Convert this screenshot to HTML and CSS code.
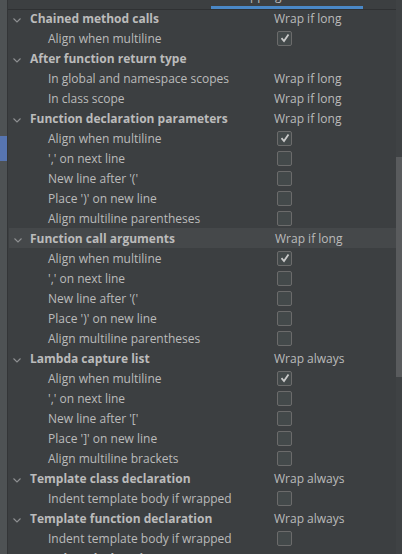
FILE: index.html
```html
<!DOCTYPE html>
<html>
<head>
<meta charset="utf-8">
<link rel="stylesheet" href="styles.css">
</head>
<body>
<div class="app">
  <div class="side"><div class="side-mark"></div></div>
  <div class="main">
    <div class="tabs"><div class="tab active"><span class="tab-label">Wrapping and Braces</span></div></div>
    <div class="list">
      <div class="inner">
        <div class="row group"><div class="lab"><svg class="chev" viewBox="0 0 8 5"><path d="M0.5 0.5 L4 4 L7.5 0.5"/></svg>Chained method calls</div><div class="val">Wrap if long</div></div>
        <div class="row child"><div class="lab">Align when multiline</div><div class="val"><span class="cb on"><svg viewBox="0 0 12 12"><path d="M2.5 6.2 L5 9 L9.5 2.5"/></svg></span></div></div>
        <div class="row group"><div class="lab"><svg class="chev" viewBox="0 0 8 5"><path d="M0.5 0.5 L4 4 L7.5 0.5"/></svg>After function return type</div><div class="val"></div></div>
        <div class="row child"><div class="lab">In global and namespace scopes</div><div class="val">Wrap if long</div></div>
        <div class="row child"><div class="lab">In class scope</div><div class="val">Wrap if long</div></div>
        <div class="row group"><div class="lab"><svg class="chev" viewBox="0 0 8 5"><path d="M0.5 0.5 L4 4 L7.5 0.5"/></svg>Function declaration parameters</div><div class="val">Wrap if long</div></div>
        <div class="row child"><div class="lab">Align when multiline</div><div class="val"><span class="cb on"><svg viewBox="0 0 12 12"><path d="M2.5 6.2 L5 9 L9.5 2.5"/></svg></span></div></div>
        <div class="row child"><div class="lab">',' on next line</div><div class="val"><span class="cb"></span></div></div>
        <div class="row child"><div class="lab">New line after '('</div><div class="val"><span class="cb"></span></div></div>
        <div class="row child"><div class="lab">Place ')' on new line</div><div class="val"><span class="cb"></span></div></div>
        <div class="row child"><div class="lab">Align multiline parentheses</div><div class="val"><span class="cb"></span></div></div>
        <div class="row group sel"><div class="lab"><svg class="chev" viewBox="0 0 8 5"><path d="M0.5 0.5 L4 4 L7.5 0.5"/></svg>Function call arguments</div><div class="val">Wrap if long</div></div>
        <div class="row child"><div class="lab">Align when multiline</div><div class="val"><span class="cb on"><svg viewBox="0 0 12 12"><path d="M2.5 6.2 L5 9 L9.5 2.5"/></svg></span></div></div>
        <div class="row child"><div class="lab">',' on next line</div><div class="val"><span class="cb"></span></div></div>
        <div class="row child"><div class="lab">New line after '('</div><div class="val"><span class="cb"></span></div></div>
        <div class="row child"><div class="lab">Place ')' on new line</div><div class="val"><span class="cb"></span></div></div>
        <div class="row child"><div class="lab">Align multiline parentheses</div><div class="val"><span class="cb"></span></div></div>
        <div class="row group"><div class="lab"><svg class="chev" viewBox="0 0 8 5"><path d="M0.5 0.5 L4 4 L7.5 0.5"/></svg>Lambda capture list</div><div class="val">Wrap always</div></div>
        <div class="row child"><div class="lab">Align when multiline</div><div class="val"><span class="cb on"><svg viewBox="0 0 12 12"><path d="M2.5 6.2 L5 9 L9.5 2.5"/></svg></span></div></div>
        <div class="row child"><div class="lab">',' on next line</div><div class="val"><span class="cb"></span></div></div>
        <div class="row child"><div class="lab">New line after '['</div><div class="val"><span class="cb"></span></div></div>
        <div class="row child"><div class="lab">Place ']' on new line</div><div class="val"><span class="cb"></span></div></div>
        <div class="row child"><div class="lab">Align multiline brackets</div><div class="val"><span class="cb"></span></div></div>
        <div class="row group"><div class="lab"><svg class="chev" viewBox="0 0 8 5"><path d="M0.5 0.5 L4 4 L7.5 0.5"/></svg>Template class declaration</div><div class="val">Wrap always</div></div>
        <div class="row child"><div class="lab">Indent template body if wrapped</div><div class="val"><span class="cb"></span></div></div>
        <div class="row group"><div class="lab"><svg class="chev" viewBox="0 0 8 5"><path d="M0.5 0.5 L4 4 L7.5 0.5"/></svg>Template function declaration</div><div class="val">Wrap always</div></div>
        <div class="row child"><div class="lab">Indent template body if wrapped</div><div class="val"><span class="cb"></span></div></div>
        <div class="row group"><div class="lab"><svg class="chev" viewBox="0 0 8 5"><path d="M0.5 0.5 L4 4 L7.5 0.5"/></svg>Template declaration parameters</div><div class="val"></div></div>
      </div>
    </div>
  </div>
  <div class="scroll"><div class="thumb"></div></div>
</div>
</body>
</html>
```
FILE: styles.css
```css
html, body {
  margin: 0;
  padding: 0;
  background: #3c3f41;
}
body {
  width: 402px;
  height: 554px;
  overflow: hidden;
  font-family: "Open Sans", "Noto Sans", sans-serif;
  font-size: 12px;
  color: #bbbbbb;
}
.app {
  display: flex;
  height: 554px;
}
.side {
  width: 7px;
  flex: none;
  background: #4e5254;
  border-right: 1px solid #333537;
  display: flex;
  flex-direction: column;
}
.side-mark {
  margin-top: 136px;
  height: 25px;
  background: #5775b1;
}
.main {
  flex: 1;
  display: flex;
  flex-direction: column;
  min-width: 0;
}
.tabs {
  height: 9px;
  flex: none;
  border-bottom: 1px solid #2f3133;
  display: flex;
  overflow: hidden;
}
.tab {
  margin-left: 203px;
  width: 152px;
  height: 9px;
  box-sizing: border-box;
  border-bottom: 3px solid #4a88c7;
  position: relative;
  overflow: hidden;
}
.tab-label {
  display: block;
  margin-top: -12px;
  text-align: center;
  white-space: nowrap;
  font-size: 12px;
  line-height: 16px;
}
.list {
  flex: 1;
  overflow: hidden;
}
.inner {
  margin-top: -2px;
}
.row {
  height: 20px;
  display: grid;
  grid-template-columns: 266px 1fr;
  align-items: center;
  white-space: nowrap;
}
.row.sel {
  background: #45484a;
  margin-left: 1px;
}
.row.sel .lab {
  padding-left: 21px;
}
.lab {
  overflow: hidden;
  display: flex;
  align-items: center;
}
.group .lab {
  font-weight: bold;
  padding-left: 22px;
  position: relative;
}
.child .lab {
  padding-left: 40px;
}
.chev {
  position: absolute;
  left: 5px;
  top: 8px;
  width: 8px;
  height: 5px;
  fill: none;
  stroke: #8f9193;
  stroke-width: 1.1;
}
.val {
  display: flex;
  align-items: center;
}
.cb {
  margin-left: 3px;
  width: 13px;
  height: 13px;
  border: 1px solid #6b6b6b;
  border-radius: 2px;
  background: #43494a;
  display: flex;
  align-items: center;
  justify-content: center;
}
.cb svg {
  width: 12px;
  height: 12px;
  fill: none;
  stroke: #c9c9c9;
  stroke-width: 1.8;
}
.scroll {
  width: 6px;
  flex: none;
  background: #3f4244;
  display: flex;
  flex-direction: column;
}
.thumb {
  margin-top: 157px;
  height: 220px;
  background: #595b5d;
}
```
